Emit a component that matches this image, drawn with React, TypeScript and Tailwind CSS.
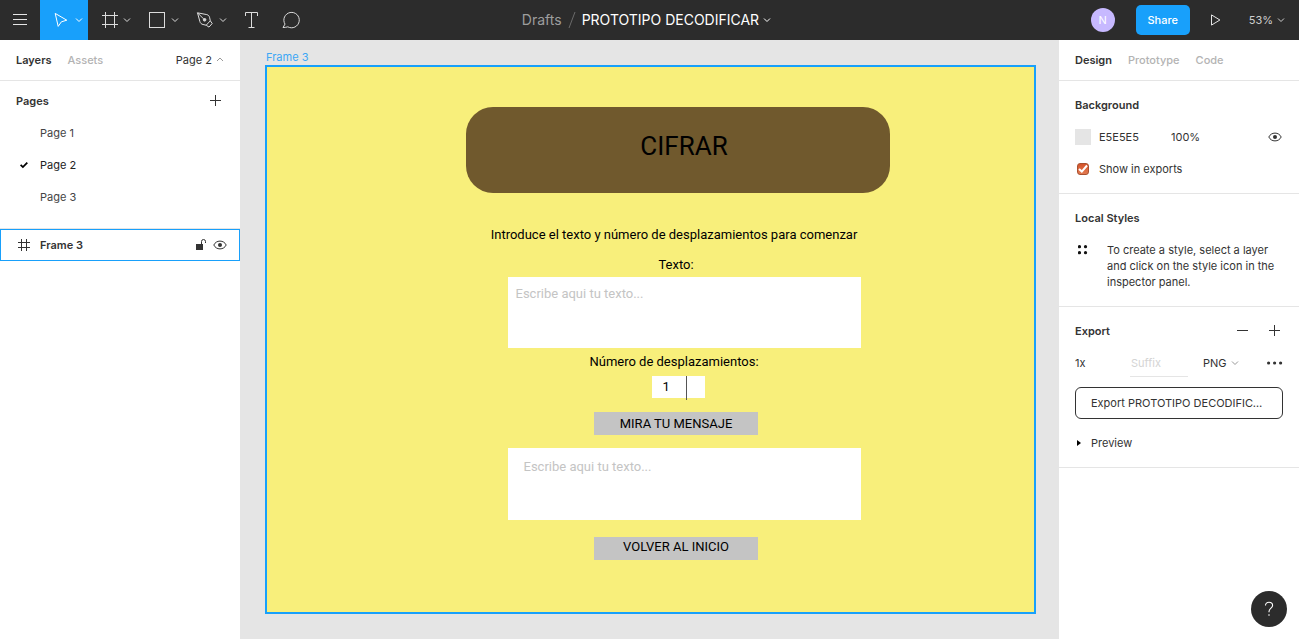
import React from "react";

type IconProps = { className?: string };

const Chevron = ({ className = "", up = false }: IconProps & { up?: boolean }) => (
  <svg className={`shrink-0 ${className}`} width="8" height="8" viewBox="0 0 8 8" fill="none" stroke="currentColor" aria-hidden="true">
    <path d={up ? "M1 5l3-3 3 3" : "M1 2.5l3 3 3-3"} />
  </svg>
);

const MenuIcon = () => (
  <svg width="16" height="16" viewBox="0 0 16 16" stroke="currentColor" fill="none" aria-hidden="true">
    <path d="M1 2.5h14M1 7.5h14M1 12.5h14" />
  </svg>
);

const MoveIcon = () => (
  <svg width="20" height="20" viewBox="0 0 20 20" stroke="currentColor" fill="none" aria-hidden="true">
    <path d="M3.2 3.4l11.6 6.8-5.4 1.6-3.2 4.6z" />
  </svg>
);

const FrameIcon = () => (
  <svg width="20" height="20" viewBox="0 0 20 20" stroke="currentColor" fill="none" aria-hidden="true">
    <path d="M5.5 2v16M14.5 2v16M2 5.5h16M2 14.5h16" />
  </svg>
);

const RectIcon = () => (
  <svg width="20" height="20" viewBox="0 0 20 20" stroke="currentColor" fill="none" aria-hidden="true">
    <rect x="1.5" y="2.5" width="15" height="15" />
  </svg>
);

const PenIcon = () => (
  <svg width="20" height="20" viewBox="0 0 20 20" stroke="currentColor" fill="none" strokeLinejoin="round" aria-hidden="true">
    <path d="M1.5 2.8l9.3 1.8c1.7.4 2.6 1.6 2.9 3.2l.6 3-4.1 4.4-3.2-.7c-1.6-.4-2.7-1.3-3.1-2.9z" />
    <path d="M1.5 2.8l6 6M14.3 10.8l1.9 2.7-3.2 3.6-2.8-1.9" />
    <circle cx="8.6" cy="9.8" r="1.3" fill="currentColor" />
  </svg>
);

const TextIcon = () => (
  <svg width="20" height="20" viewBox="0 0 20 20" stroke="currentColor" fill="none" aria-hidden="true">
    <path d="M3.5 6V2.5h12V6M9.5 2.5v15M6.5 17.5h6" />
  </svg>
);

const CommentIcon = () => (
  <svg width="20" height="20" viewBox="0 0 20 20" stroke="currentColor" fill="none" strokeLinejoin="round" aria-hidden="true">
    <path d="M1 17.5l2-3.4a7.7 7.7 0 1 1 2.8 2.7c-1.3.5-3 .7-4.8.7z" />
  </svg>
);

const PlusIcon = () => (
  <svg width="12" height="12" viewBox="0 0 12 12" stroke="currentColor" fill="none" aria-hidden="true">
    <path d="M5.5 0v11M0 5.5h11" />
  </svg>
);

const MinusIcon = () => (
  <svg width="12" height="12" viewBox="0 0 12 12" stroke="currentColor" fill="none" aria-hidden="true">
    <path d="M0 5.5h11" />
  </svg>
);

const EyeIcon = () => (
  <svg width="14" height="10" viewBox="0 0 14 10" fill="none" stroke="currentColor" aria-hidden="true">
    <path d="M.8 5C2 2.5 4.3 1.1 7 1.1S12 2.5 13.2 5C12 7.5 9.7 8.9 7 8.9S2 7.5.8 5z" />
    <circle cx="7" cy="5" r="2" fill="currentColor" stroke="none" />
  </svg>
);

const UnlockIcon = () => (
  <svg width="10" height="12" viewBox="0 0 10 12" fill="none" stroke="currentColor" aria-hidden="true">
    <rect x="0" y="5" width="7" height="6" fill="currentColor" stroke="none" />
    <path d="M5.5 5V2.5a2 2 0 0 1 4 0V4" />
  </svg>
);

const SmallFrameIcon = () => (
  <svg width="12" height="12" viewBox="0 0 12 12" stroke="currentColor" fill="none" aria-hidden="true">
    <path d="M3.5 0v12M8.5 0v12M0 3.5h12M0 8.5h12" />
  </svg>
);

const CheckIcon = () => (
  <svg width="8" height="8" viewBox="0 0 8 8" stroke="#000" strokeWidth="1.8" fill="none" aria-hidden="true">
    <path d="M.6 3.8l2.3 2.3L7.3 1.7" />
  </svg>
);

function Tool({ label, active = false, children }: { label: string; active?: boolean; children: React.ReactNode }) {
  return (
    <button
      aria-label={label}
      className={`flex h-10 w-12 items-center gap-[3px] pl-3 ${active ? "bg-[#18a0fb] text-white" : "text-[#dcdcdc]"}`}
    >
      {children}
      <Chevron />
    </button>
  );
}

function TopBar() {
  return (
    <header className="flex h-10 shrink-0 items-center justify-between bg-[#2c2c2c] text-white">
      <div className="flex flex-1 items-center">
        <button aria-label="Menu" className="flex size-10 items-center justify-center text-[#e5e5e5]"><MenuIcon /></button>
        <Tool label="Move" active><MoveIcon /></Tool>
        <Tool label="Frame"><FrameIcon /></Tool>
        <Tool label="Rectangle"><RectIcon /></Tool>
        <Tool label="Pen"><PenIcon /></Tool>
        <button aria-label="Text" className="flex size-10 items-center justify-center text-[#dcdcdc]"><TextIcon /></button>
        <button aria-label="Comment" className="flex size-10 items-center justify-center text-[#dcdcdc]"><CommentIcon /></button>
      </div>
      <div className="flex items-center pl-2 text-sm">
        <a href="#drafts" className="text-[#9d9d9d]">Drafts</a>
        <svg className="mx-1.5" width="8" height="18" viewBox="0 0 8 18" stroke="#6b6b6b" fill="none" aria-hidden="true">
          <path d="M7 1L1 17" />
        </svg>
        <button className="flex items-center gap-1">PROTOTIPO DECODIFICAR<Chevron /></button>
      </div>
      <div className="flex flex-1 items-center justify-end pr-3.5">
        <span className="flex size-6 items-center justify-center rounded-full bg-[#c7b9ff] text-[11px]">N</span>
        <button className="ml-[21px] h-[30px] w-[54px] rounded-[5px] bg-[#18a0fb] text-[11px] font-medium">Share</button>
        <button aria-label="Present" className="ml-5 text-[#e5e5e5]">
          <svg width="12" height="12" viewBox="0 0 12 12" stroke="currentColor" fill="none" aria-hidden="true">
            <path d="M1.5 .9v10.2L9.9 6z" />
          </svg>
        </button>
        <button className="ml-[27px] flex items-center gap-1 text-[11px] text-[#cfcfcf]">53%<Chevron /></button>
      </div>
    </header>
  );
}

function LeftPanel() {
  return (
    <aside className="w-60 shrink-0 bg-white">
      <div className="flex h-[41px] items-center border-b border-[#e5e5e5] px-4">
        <button className="font-semibold">Layers</button>
        <button className="ml-4 font-medium text-[#b3b3b3]">Assets</button>
        <button className="ml-auto flex items-center gap-1">Page 2<Chevron up className="text-[#999]" /></button>
      </div>
      <div className="flex h-9 items-center justify-between pt-1 pr-[18px] pl-4">
        <h2 className="font-semibold">Pages</h2>
        <button aria-label="Add page"><PlusIcon /></button>
      </div>
      <ul className="border-b border-[#e5e5e5] pb-[15px]">
        {["Page 1", "Page 2", "Page 3"].map((page) => (
          <li key={page}>
            <button className={`flex h-8 w-full items-center pl-5 ${page === "Page 2" ? "text-[#222]" : "text-[#444]"}`}>
              <span className="w-5">{page === "Page 2" && <CheckIcon />}</span>
              {page}
            </button>
          </li>
        ))}
      </ul>
      <div className="flex h-8 items-center border border-[#18a0fb] pr-3 pl-[17px]">
        <SmallFrameIcon />
        <span className="ml-2.5 flex-1 font-semibold">Frame 3</span>
        <button aria-label="Unlock"><UnlockIcon /></button>
        <button aria-label="Toggle visibility" className="ml-[7px]"><EyeIcon /></button>
      </div>
    </aside>
  );
}

function Canvas() {
  return (
    <main className="flex min-w-0 flex-1 flex-col bg-[#e5e5e5] pt-2.5 pr-[23px] pb-[25px] pl-[25px]">
      <span className="pl-px leading-[15px] text-[#3ba7f5]">Frame 3</span>
      <section className="flex flex-1 flex-col items-center border-2 border-[#18a0fb] bg-[#f8ef7b] pt-10 pl-[51px] font-[Roboto,sans-serif] text-[13px] leading-5 text-black">
        <h1 className="ml-1 flex h-[86px] w-[424px] shrink-0 items-center justify-center rounded-[27px] bg-[#70592d] pb-2 pl-3 text-[26px]">
          CIFRAR
        </h1>
        <p className="mt-8 mr-1">Introduce el texto y número de desplazamientos para comenzar</p>
        <label htmlFor="source" className="mt-2.5">Texto:</label>
        <textarea
          id="source"
          placeholder="Escribe aqui tu texto..."
          className="mt-0.5 ml-4 h-[71px] w-[353px] shrink-0 resize-none bg-white px-2 py-[7px] outline-none placeholder:text-[#c4c4c4]"
        />
        <label htmlFor="shift" className="mt-1 mr-1">Número de desplazamientos:</label>
        <div className="mt-1 ml-1 flex h-[22px] w-[53px] shrink-0 bg-white">
          <input id="shift" defaultValue="1" className="w-[34px] bg-transparent pl-[11px] outline-none" />
          <span className="h-6 w-px shrink-0 bg-[#555]" />
        </div>
        <button className="mt-3.5 h-[23px] w-[164px] shrink-0 bg-[#c4c4c4]">MIRA TU MENSAJE</button>
        <textarea
          aria-label="Mensaje"
          placeholder="Escribe aqui tu texto..."
          className="mt-[13px] ml-4 h-[72px] w-[353px] shrink-0 resize-none bg-white px-4 py-[9px] outline-none placeholder:text-[#c4c4c4]"
        />
        <button className="mt-[17px] h-[23px] w-[164px] shrink-0 bg-[#c4c4c4] pb-1">VOLVER AL INICIO</button>
      </section>
    </main>
  );
}

function RightPanel() {
  return (
    <aside className="w-60 shrink-0 bg-white">
      <div className="flex h-[41px] items-center gap-4 border-b border-[#e5e5e5] px-4">
        <button className="font-semibold">Design</button>
        <button className="font-medium text-[#b3b3b3]">Prototype</button>
        <button className="font-medium text-[#b3b3b3]">Code</button>
      </div>

      <section className="border-b border-[#e5e5e5] px-4 py-2">
        <h2 className="flex h-8 items-center font-semibold">Background</h2>
        <div className="flex h-8 items-center">
          <button aria-label="Background colour" className="size-4 bg-[#e5e5e5]" />
          <input aria-label="Hex" defaultValue="E5E5E5" className="ml-2 w-[72px] outline-none" />
          <input aria-label="Opacity" defaultValue="100%" className="w-12 outline-none" />
          <button aria-label="Toggle background" className="mr-px ml-auto"><EyeIcon /></button>
        </div>
        <label className="flex h-8 items-center">
          <span className="grid size-4 place-items-center">
            <input
              type="checkbox"
              defaultChecked
              className="col-start-1 row-start-1 size-3 appearance-none rounded-[3px] border border-[#a9502f] bg-linear-to-b from-[#d4532a] to-[#e27a50]"
            />
            <svg className="pointer-events-none col-start-1 row-start-1" width="10" height="10" viewBox="0 0 10 10" stroke="#fff" strokeWidth="2" fill="none" aria-hidden="true">
              <path d="M1 5l2.800 2.600L9 1.500" />
            </svg>
          </span>
          <span className="ml-2">Show in exports</span>
        </label>
      </section>

      <section className="border-b border-[#e5e5e5] px-4 pt-2 pb-4">
        <h2 className="flex h-8 items-center font-semibold">Local Styles</h2>
        <div className="flex pt-2">
          <svg className="mt-[3px] ml-[3px] shrink-0" width="10" height="10" viewBox="0 0 10 10" fill="#111" aria-hidden="true">
            <circle cx="1.5" cy="1.7" r="1.6" />
            <circle cx="7.5" cy="1.7" r="1.6" />
            <circle cx="1.5" cy="7.7" r="1.6" />
            <circle cx="7.5" cy="7.7" r="1.6" />
          </svg>
          <p className="ml-[19px]">To create a style, select a layer and click on the style icon in the inspector panel.</p>
        </div>
      </section>

      <section className="border-b border-[#e5e5e5] px-4 py-2">
        <div className="flex h-8 items-center">
          <h2 className="flex-1 font-semibold">Export</h2>
          <button aria-label="Remove export"><MinusIcon /></button>
          <button aria-label="Add export" className="mr-0.5 ml-5"><PlusIcon /></button>
        </div>
        <div className="flex h-8 items-center">
          <input aria-label="Scale" defaultValue="1x" className="w-[55px] outline-none" />
          <input
            aria-label="Suffix"
            placeholder="Suffix"
            className="h-7 w-[58px] border-b border-[#e5e5e5] pl-px outline-none placeholder:text-[#d4d4d4]"
          />
          <button className="ml-[15px] flex items-center gap-1">PNG<Chevron className="text-[#999]" /></button>
          <button aria-label="More options" className="ml-auto">
            <svg width="16" height="4" viewBox="0 0 16 4" fill="currentColor" aria-hidden="true">
              <circle cx="1.6" cy="2" r="1.6" />
              <circle cx="7.6" cy="2" r="1.6" />
              <circle cx="13.6" cy="2" r="1.6" />
            </svg>
          </button>
        </div>
        <button className="mt-2 block h-8 w-full truncate rounded-md border border-[#333] px-[15px] text-left">
          Export PROTOTIPO DECODIFICAR
        </button>
        <button className="mt-2 flex h-8 items-center">
          <svg className="ml-0.5" width="4" height="6" viewBox="0 0 4 6" fill="#000" aria-hidden="true">
            <path d="M0 0l4 3-4 3z" />
          </svg>
          <span className="ml-2.5">Preview</span>
        </button>
      </section>
    </aside>
  );
}

export default function App() {
  return (
    <div className="flex min-h-screen flex-col font-[Inter,sans-serif] text-[11px] leading-4 text-[#333]">
      <TopBar />
      <div className="flex flex-1">
        <LeftPanel />
        <Canvas />
        <RightPanel />
      </div>
      <button
        aria-label="Help"
        className="fixed right-3 bottom-3 flex size-9 items-center justify-center rounded-full bg-[#2c2c2c] text-white"
      >
        <svg width="10" height="16" viewBox="0 0 10 16" fill="none" stroke="currentColor" strokeWidth="1.1" aria-hidden="true">
          <path d="M1.5 4.5C1.5 2.5 3 1.2 5 1.2s3.6 1.3 3.6 3.2C8.600 7 5 7.200 5 10.500v.7" />
          <circle cx="5" cy="14" r=".8" fill="currentColor" stroke="none" />
        </svg>
      </button>
    </div>
  );
}
